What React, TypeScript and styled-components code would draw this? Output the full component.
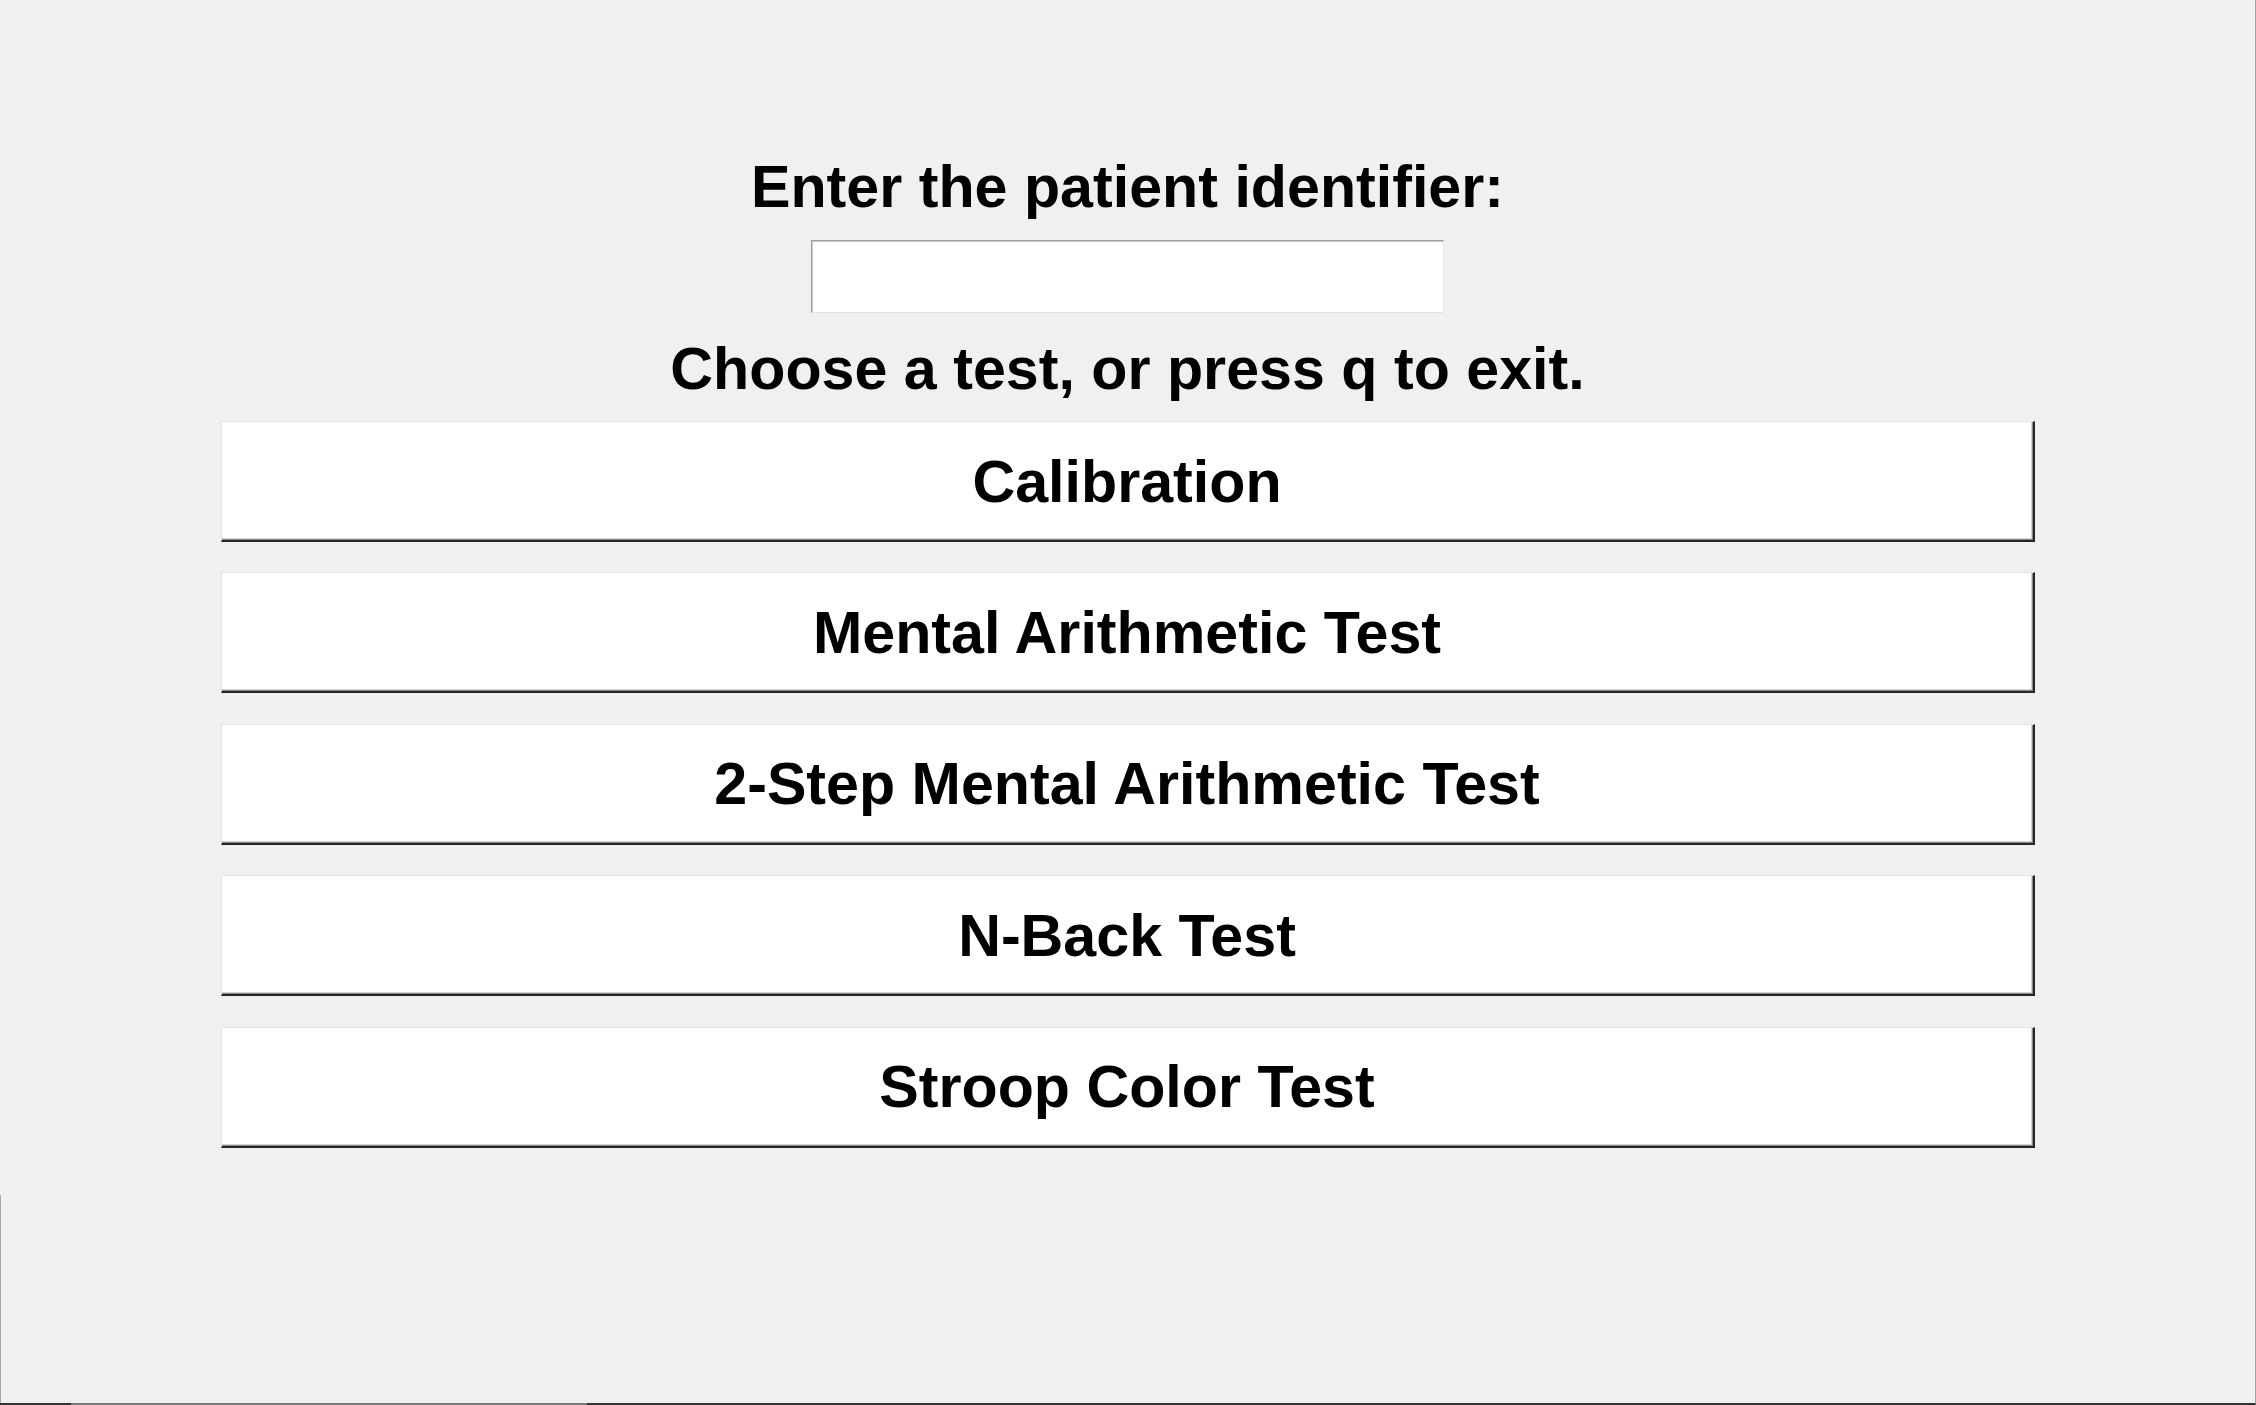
import React from 'react';
import styled, { createGlobalStyle } from 'styled-components';

const tests = ['Calibration', 'Mental Arithmetic Test', '2-Step Mental Arithmetic Test', 'N-Back Test', 'Stroop Color Test'];

const GlobalStyle = createGlobalStyle`
  html, body {
    margin: 0;
    padding: 0;
    background: #f0f0f0;
    overflow: hidden;
  }
  * {
    box-sizing: border-box;
  }
`;

const Window = styled.div`
  position: relative;
  width: 100vw;
  height: 100vh;
  display: flex;
  flex-direction: column;
  align-items: center;
  padding-top: 152.5px;
  background: #f0f0f0;
  border-right: 1px solid #a0a0a0;
  border-bottom: 2px solid #333;
  font-family: 'Liberation Sans', Arial, sans-serif;
  color: #000;

  /* frame edge at the lower left */
  &::before {
    content: '';
    position: absolute;
    left: 0;
    top: 1195px;
    bottom: 0;
    width: 1px;
    background: #a8a8a8;
  }

  /* lighter stretch of the bottom edge */
  &::after {
    content: '';
    position: absolute;
    left: 71px;
    width: 516px;
    bottom: -2px;
    height: 2px;
    background: #7a7a7a;
  }
`;

const Label = styled.div<{ $gap?: number }>`
  font-size: 59.2px;
  line-height: 68px;
  font-weight: 700;
  white-space: nowrap;
  margin-bottom: ${(p) => p.$gap ?? 0}px;
`;

const IdentifierInput = styled.input`
  width: 633px;
  height: 73px;
  margin-bottom: 22px;
  background: #fff;
  border-style: solid;
  border-width: 1px;
  border-color: #a0a0a0 #e3e3e3 #e3e3e3 #a0a0a0;
  box-shadow: inset 1px 1px 0 #c8c8c8;
  font-family: 'Liberation Sans', Arial, sans-serif;
  font-size: 40px;
  padding: 0 8px;
  outline: none;
`;

const TestList = styled.div`
  display: flex;
  flex-direction: column;
  gap: 30.4px;
  width: 1814px;
`;

const TestButton = styled.button`
  height: 121px;
  width: 100%;
  display: flex;
  align-items: center;
  justify-content: center;
  background: #fff;
  border-style: solid;
  border-width: 1px 2px 2px 1px;
  border-color: #e3e3e3 #262626 #262626 #e3e3e3;
  box-shadow: inset -1px -1px 0 #8a8a8a, inset -2px -2px 0 #d4d4d4;
  font-family: 'Liberation Sans', Arial, sans-serif;
  font-size: 59.2px;
  font-weight: 700;
  color: #000;
  padding: 0;
  cursor: pointer;
`;

export default function App() {
  return (
    <>
      <GlobalStyle />
      <Window>
        <Label $gap={19}>Enter the patient identifier:</Label>
        <IdentifierInput type="text" />
        <Label $gap={18.5}>Choose a test, or press q to exit.</Label>
        <TestList>
          {tests.map((t) => (
            <TestButton key={t}>{t}</TestButton>
          ))}
        </TestList>
      </Window>
    </>
  );
}
